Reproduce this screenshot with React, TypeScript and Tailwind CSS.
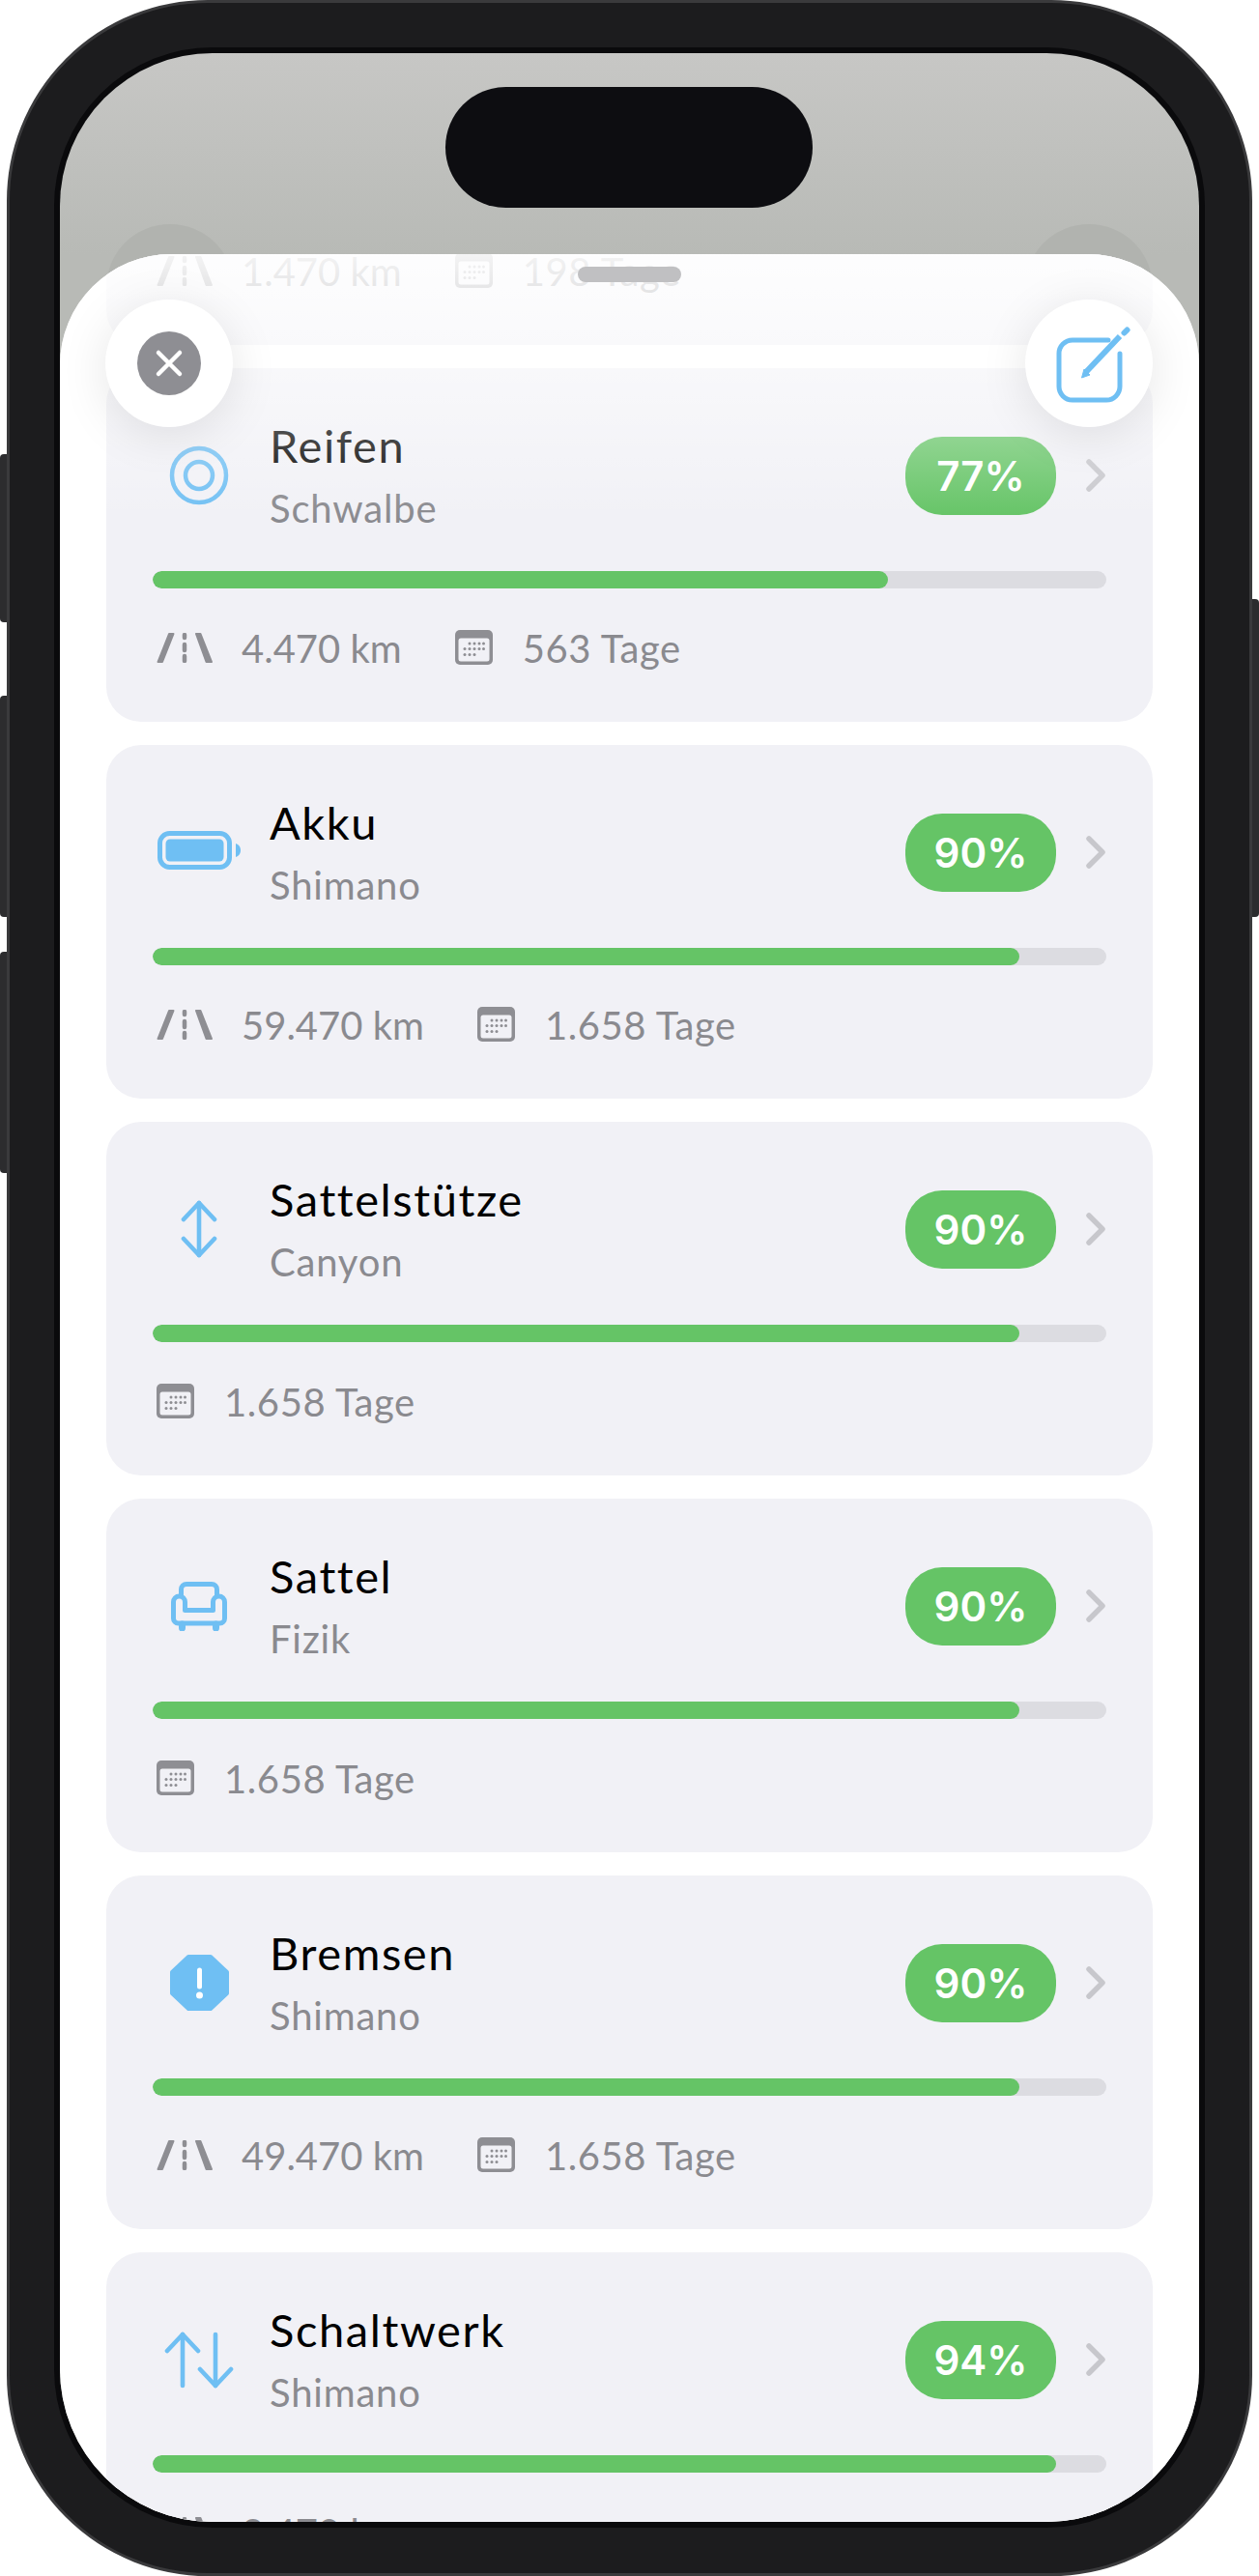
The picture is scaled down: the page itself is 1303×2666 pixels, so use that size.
import React from "react";

const BLUE = "#6fbff3";
const GREY = "#8e8e93";

function TyreIcon() {
  return (
    <svg width="62" height="62" viewBox="0 0 62 62" fill="none" stroke={BLUE}>
      <circle cx="31" cy="31" r="28" strokeWidth="4.5" />
      <circle cx="31" cy="31" r="14" strokeWidth="4.5" />
    </svg>
  );
}

function BatteryIcon() {
  return (
    <svg width="86" height="40" viewBox="0 0 86 40" fill="none" className="-mt-[4px]">
      <rect x="2.5" y="2.5" width="72" height="35" rx="10" stroke={BLUE} strokeWidth="5" />
      <rect x="8.5" y="8.5" width="60" height="23" rx="4.5" fill={BLUE} />
      <path d="M81 13c3 .8 5 3.6 5 7s-2 6.200-5 7z" fill={BLUE} />
    </svg>
  );
}

function PostIcon() {
  return (
    <svg width="40" height="60" viewBox="0 0 40 60" fill="none" stroke={BLUE} strokeWidth="4.6" strokeLinecap="round" strokeLinejoin="round">
      <path d="M20 3V57" />
      <path d="M4 20L20 3L36 20" />
      <path d="M4 40L20 57L36 40" />
    </svg>
  );
}

function SeatIcon() {
  return (
    <svg width="58" height="51" viewBox="0 0 58 51" fill="none" stroke={BLUE} strokeWidth="5" strokeLinejoin="round" strokeLinecap="round">
      <path d="M10.500 14V8a5.500 5.500 0 0 1 5.500-5.500H42a5.500 5.500 0 0 1 5.500 5.500V14" />
      <path d="M2.500 21a6 6 0 0 1 6-6a6 6 0 0 1 6 6V29.500H43.500V21a6 6 0 0 1 6-6a6 6 0 0 1 6 6V38a5 5 0 0 1-5 5H7.500a5 5 0 0 1-5-5Z" />
      <path d="M11.500 44V48M46.500 44V48" strokeWidth="7" />
    </svg>
  );
}

function BrakeIcon() {
  return (
    <svg width="61" height="58" viewBox="0 0 61 58">
      <path
        d="M19 2H42L59 18V40L42 56H19L2 40V18Z"
        fill={BLUE}
        stroke={BLUE}
        strokeWidth="4"
        strokeLinejoin="round"
      />
      <path d="M30.500 16V33" stroke="#fff" strokeWidth="5" strokeLinecap="round" />
      <circle cx="30.500" cy="42" r="3.500" fill="#fff" />
    </svg>
  );
}

function GearIcon() {
  return (
    <svg width="72" height="60" viewBox="0 0 72 60" fill="none" stroke={BLUE} strokeWidth="4.6" strokeLinecap="round" strokeLinejoin="round">
      <path d="M19 4V57" />
      <path d="M3 21L19 4L35 21" />
      <path d="M53 4V57" />
      <path d="M37 40L53 57L69 40" />
    </svg>
  );
}

function ChainIcon() {
  return (
    <svg width="60" height="60" viewBox="0 0 60 60" fill="none" stroke={BLUE} strokeWidth="4.6" strokeLinecap="round">
      <rect x="4" y="20" width="30" height="20" rx="10" />
      <rect x="26" y="20" width="30" height="20" rx="10" />
    </svg>
  );
}

function RoadIcon() {
  return (
    <svg width="58" height="31" viewBox="0 0 58 31" className="shrink-0" fill={GREY} stroke={GREY} strokeWidth="2" strokeLinejoin="round">
      <path d="M1.500 30L13 1H17.500L6 30Z" />
      <path d="M41 1H45.500L57 30H51.500Z" />
      <path d="M29 2V5M29 12V18M29 24V29" fill="none" strokeWidth="4.500" strokeLinecap="round" />
    </svg>
  );
}

function CalendarIcon() {
  const dots = [
    [15, 14], [20, 14], [25, 14], [29.500, 14],
    [10, 19.500], [15, 19.500], [20, 19.500], [25, 19.500], [29.500, 19.500],
    [10, 25.500], [15, 25.500], [20, 25.500],
  ];
  return (
    <svg width="39" height="36" viewBox="0 0 39 36" className="shrink-0">
      <rect width="39" height="36" rx="5" fill={GREY} />
      <rect x="3.500" y="8.500" width="32" height="24" rx="2.500" fill="#f1f1f6" />
      {dots.map(([x, y]) => (
        <circle key={`${x}-${y}`} cx={x} cy={y} r="1.500" fill={GREY} />
      ))}
    </svg>
  );
}

type Part = {
  name: string;
  brand: string;
  percent: number;
  fill: string;
  km?: string;
  days?: string;
  icon: React.ReactNode;
};

const parts: Part[] = [
  { name: "Kette", brand: "Shimano", percent: 25, fill: "25%", km: "1.470 km", days: "198 Tage", icon: <ChainIcon /> },
  { name: "Reifen", brand: "Schwalbe", percent: 77, fill: "77.1%", km: "4.470 km", days: "563 Tage", icon: <TyreIcon /> },
  { name: "Akku", brand: "Shimano", percent: 90, fill: "90.900%", km: "59.470 km", days: "1.658 Tage", icon: <BatteryIcon /> },
  { name: "Sattelstütze", brand: "Canyon", percent: 90, fill: "90.900%", days: "1.658 Tage", icon: <PostIcon /> },
  { name: "Sattel", brand: "Fizik", percent: 90, fill: "90.900%", days: "1.658 Tage", icon: <SeatIcon /> },
  { name: "Bremsen", brand: "Shimano", percent: 90, fill: "90.900%", km: "49.470 km", days: "1.658 Tage", icon: <BrakeIcon /> },
  { name: "Schaltwerk", brand: "Shimano", percent: 94, fill: "94.700%", km: "2.470 km", icon: <GearIcon /> },
];

function PartCard({ part }: { part: Part }) {
  return (
    <div className="h-[366px] shrink-0 rounded-[36px] bg-[#f1f1f6] px-[48px] pt-[46px]">
      <div className="flex h-[130px] items-center">
        <div className="flex w-[96px] shrink-0 items-center justify-center">{part.icon}</div>
        <div className="ml-[25px] mt-[3px] flex-1">
          <div className="text-[47px] leading-[65px] tracking-[1.6px] text-black">{part.name}</div>
          <div className="text-[40px] leading-[65px] tracking-[0.8px] text-[#8a8a8f]">{part.brand}</div>
        </div>
        <div className="flex h-[81px] w-[156px] items-center justify-center rounded-[38px] bg-[#65c466] font-['Inter',sans-serif] text-[42px] font-semibold text-white">
          {part.percent}%
        </div>
        <div className="ml-[31px] flex w-[21px] justify-center">
          <svg width="21" height="36" viewBox="0 0 21 36" fill="none" stroke="#c7c7cc" strokeWidth="5.500" strokeLinecap="round" strokeLinejoin="round">
            <path d="M3 4L17 18L3 32" />
          </svg>
        </div>
      </div>
      <div className="mt-[34px] h-[18px] overflow-hidden rounded-[9px] bg-[#dcdce1]">
        <div className="h-full rounded-[9px] bg-[#65c466]" style={{ width: part.fill }} />
      </div>
      <div className="ml-[4px] mt-[39px] flex h-[44px] items-center text-[40px] text-[#8a8a8f]">
        {part.km && (
          <div className="mr-[55px] flex items-center gap-[30px]">
            <RoadIcon />
            <span className="pt-[2px]">{part.km}</span>
          </div>
        )}
        {part.days && (
          <div className="flex items-center gap-[31px]">
            <CalendarIcon />
            <span className="pt-[2px] tracking-[0.6px]">{part.days}</span>
          </div>
        )}
      </div>
    </div>
  );
}

export default function App() {
  return (
    <div className="relative h-[2666px] w-[1303px] overflow-hidden bg-white font-['Lato',sans-serif]">
      {/* side buttons */}
      <div className="absolute left-0 top-[470px] h-[174px] w-[8px] rounded-l-[4px] bg-[#2c2c2e]" />
      <div className="absolute left-0 top-[720px] h-[229px] w-[8px] rounded-l-[4px] bg-[#2c2c2e]" />
      <div className="absolute left-0 top-[985px] h-[229px] w-[8px] rounded-l-[4px] bg-[#2c2c2e]" />
      <div className="absolute right-0 top-[620px] h-[329px] w-[8px] rounded-r-[4px] bg-[#2c2c2e]" />

      {/* device body */}
      <div className="relative ml-[7px] h-full w-[1289px] rounded-[208px] border-[3px] border-[#3a3a3c] bg-[#1c1c1e] px-[46px] pb-[47px] pt-[46px]">
        <div className="h-full rounded-[164px] border-[6px] border-[#0a0a0c] bg-[#0a0a0c]">
          <div className="relative flex h-full flex-col overflow-hidden rounded-[158px] bg-[linear-gradient(#c7c7c5_0,#b8bab6_208px)] pt-[208px]">
            {/* dimmed buttons of the page behind the sheet */}
            <div className="absolute left-[48px] top-[177px] h-[132px] w-[132px] rounded-full bg-[#b1b3af]" />
            <div className="absolute right-[48px] top-[177px] h-[132px] w-[132px] rounded-full bg-[#b1b3af]" />

            {/* sheet */}
            <div className="relative min-h-0 flex-1 overflow-hidden rounded-t-[115px] bg-white">
              <div className="mt-[-272px] flex flex-col gap-[24px] px-[48px]">
                {parts.map((part) => (
                  <PartCard key={part.name} part={part} />
                ))}
              </div>

              {/* fade under the header */}
              <div className="absolute inset-x-0 top-0 h-[275px] bg-gradient-to-b from-white/90 to-white/0" />

              {/* grabber */}
              <div className="absolute left-[536px] top-[13px] h-[16px] w-[107px] rounded-[8px] bg-[#c0c0c2]" />

              {/* close */}
              <div className="absolute left-[47px] top-[47px] flex h-[132px] w-[132px] items-center justify-center rounded-full bg-white shadow-[0_8px_50px_rgba(0,0,0,0.1)]">
                <div className="flex h-[66px] w-[66px] items-center justify-center rounded-full bg-[#8e8e93]">
                  <svg width="30" height="30" viewBox="0 0 30 30" fill="none" stroke="#fff" strokeWidth="4.500" strokeLinecap="round">
                    <path d="M4 4L26 26M26 4L4 26" />
                  </svg>
                </div>
              </div>

              {/* edit */}
              <div className="absolute right-[48px] top-[47px] flex h-[132px] w-[132px] items-center justify-center rounded-full bg-white shadow-[0_8px_50px_rgba(0,0,0,0.1)]">
                <svg width="82" height="82" viewBox="0 0 82 82" fill="none" stroke={BLUE} className="ml-[7px] mt-[6px]">
                  <path d="M57 14H20a14 14 0 0 0-14 14v34a14 14 0 0 0 14 14h35a14 14 0 0 0 14-14V28" strokeWidth="5" strokeLinecap="round" />
                  <path d="M34 47L69 10" strokeWidth="6" />
                  <path d="M29.500 53L32 44L38 50Z" fill={BLUE} strokeWidth="1" strokeLinejoin="round" />
                  <path d="M73.500 6.500L76.500 3.500" strokeWidth="6" strokeLinecap="round" />
                </svg>
              </div>
            </div>

            {/* camera island */}
            <div className="absolute left-[399px] top-[35px] h-[125px] w-[380px] rounded-[63px] bg-[#0d0d11]" />
          </div>
        </div>
      </div>
    </div>
  );
}
